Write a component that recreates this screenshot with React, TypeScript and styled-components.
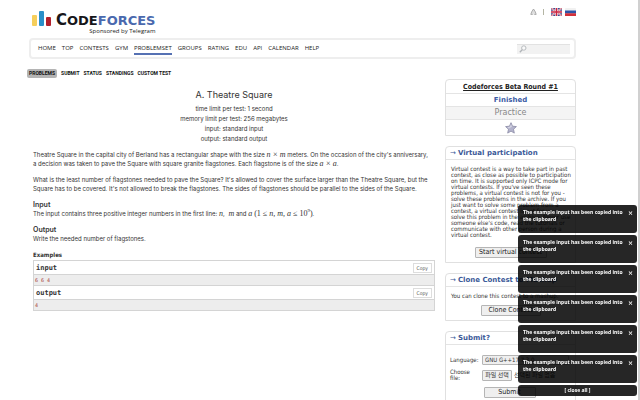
import React from 'react';
import styled, { createGlobalStyle } from 'styled-components';

const sans = '"Inter", "Liberation Sans", sans-serif';
const verdana = '"DejaVu Sans Condensed", "DejaVu Sans", sans-serif';
const verdanaWide = '"DejaVu Sans", sans-serif';
const menuFont = '"Open Sans", sans-serif';
const mono = '"DejaVu Sans Mono", monospace';

const Global = createGlobalStyle`
  * { box-sizing: border-box; }
  html { scrollbar-width: none; }
  body { margin: 0; background: #fff; color: #333; font: 6px/9px ${sans}; }
  button, input, select { font: inherit; color: inherit; margin: 0; }
  a { color: inherit; text-decoration: none; }
`;

const Page = styled.div`
  min-height: 100vh;
  padding: 7px 62px 0 29px;
  border-right: 2px solid #d0d0d0;
`;

const Header = styled.header`
  display: flex;
  justify-content: space-between;
  align-items: flex-start;
  height: 31px;
`;

const Brand = styled.a`
  display: flex;
  gap: 5px;
  padding: 4px 0 0 3px;
`;

const Wordmark = styled.div`
  display: flex;
  flex-direction: column;
  align-items: flex-end;
  padding-top: 2px;
`;

const LogoText = styled.span`
  display: block;
  font: bold 13px/14px ${verdanaWide};
  color: #16161a;
`;

const Initial = styled.span`
  font-size: 15px;
`;

const LogoBlue = styled.span`
  color: #4a69ae;
`;

const Sponsor = styled.span`
  font: 6px/6px ${menuFont};
  color: #222;
`;

const HeaderTools = styled.div`
  display: flex;
  align-items: center;
  gap: 3px;
  height: 10px;
`;

const Divider = styled.span`
  width: 1px;
  height: 6px;
  margin: 0 4px 0 3px;
  background: #b4b5a4;
`;

const NavBar = styled.nav`
  display: flex;
  align-items: center;
  justify-content: space-between;
  height: 21px;
  padding: 0 4px 0 7px;
  border: 2px solid #eeeeee;
  border-radius: 4px;
`;

const NavList = styled.div`
  display: flex;
  gap: 6px;
`;

const NavLink = styled.a<{ $active?: boolean }>`
  padding-top: 2px;
  font: 6px/9px ${menuFont};
  color: #222;
  border-bottom: 2px solid ${(p) => (p.$active ? '#5571b3' : 'transparent')};
`;

const SearchBox = styled.label`
  display: flex;
  align-items: center;
  width: 53px;
  height: 10px;
  padding-left: 2px;
  background: #f2f2f2;
  border-top: 1px solid #e2e2e2;
`;

const SearchInput = styled.input`
  flex: 1;
  min-width: 0;
  height: 8px;
  padding: 0 2px;
  border: 0;
  outline: 0;
  background: transparent;
`;

const SubNav = styled.nav`
  display: flex;
  gap: 4px;
  margin: 10px 0 0 -2px;
`;

const SubLink = styled.a<{ $active?: boolean }>`
  padding: 0 ${(p) => (p.$active ? 2 : 0)}px;
  font: bold 5px/9px Roboto, sans-serif;
  color: #111;
  border-radius: 2px;
  background: ${(p) => (p.$active ? '#b4b4b4' : 'transparent')};
`;

const Columns = styled.div`
  display: flex;
  align-items: flex-start;
  gap: 10px;
  margin-top: 1px;
`;

const Main = styled.main`
  flex: 1;
  min-width: 0;
  padding: 9px 0 0 4px;
`;

const ProblemHead = styled.div`
  text-align: center;
  line-height: 10px;
  margin-bottom: 6px;
`;

const Title = styled.h1`
  margin: 0 0 3px;
  font: 9px/13px ${sans};
`;

const Para = styled.p`
  margin: 0 0 7px;
  white-space: nowrap;
`;

const Heading = styled.h2`
  margin: 0;
  font: 600 7px/9px ${sans};
`;

const SmallHeading = styled.h2`
  margin: 0;
  font: bold 6px/10px ${verdana};
`;

const Math = styled.span`
  font: italic 8px/8px "Liberation Serif", serif;
`;

const Upright = styled.span`
  font-style: normal;
`;

const Sup = styled.sup`
  font-size: 5px;
  line-height: 0;
  font-style: normal;
`;

const Samples = styled.div`
  border: 1px solid #d4d4d4;
`;

const SampleHead = styled.div`
  display: flex;
  align-items: center;
  justify-content: space-between;
  height: 13px;
  padding: 0 2px;
  font: bold 7px/10px ${mono};
`;

const CopyButton = styled.button`
  height: 10px;
  padding: 0 3px;
  border: 1px solid #dddddd;
  background: #fff;
  font: 5px/8px ${verdana};
  color: #555;
`;

const SampleData = styled.pre<{ $last?: boolean }>`
  margin: 0;
  padding: 0 1px;
  height: ${(p) => (p.$last ? 11 : 12)}px;
  border: solid #d4d4d4;
  border-width: 1px 0 ${(p) => (p.$last ? 0 : 1)}px;
  background: #ededed;
  color: #a83a3a;
  font: 5px/10px ${mono};
`;

const Sidebar = styled.aside`
  width: 131px;
  display: flex;
  flex-direction: column;
  gap: 10px;
`;

const Box = styled.section`
  border: 1px solid #e0e0e0;
  border-radius: 4px 4px 0 0;
  font: 6px/6px ${verdana};
`;

const BoxTitle = styled.h3`
  display: flex;
  align-items: center;
  gap: 2px;
  height: 13px;
  margin: 0;
  padding-left: 4px;
  border-bottom: 1px solid #e4e4e4;
  font: bold 7px/12px ${verdanaWide};
  color: #3b5998;
  white-space: nowrap;
`;

const Arrow = styled.span`
  font-weight: normal;
`;

const BoxBody = styled.div`
  display: flex;
  flex-direction: column;
  align-items: center;
  padding: 6px 5px 4px;
`;

const BoxText = styled.p<{ $gap: number }>`
  align-self: stretch;
  margin: 0 0 ${(p) => p.$gap}px;
  white-space: nowrap;
`;

const ContestRow = styled.div<{ $tone?: 'name' | 'status' | 'phase' }>`
  display: flex;
  align-items: center;
  justify-content: center;
  height: ${(p) => (p.$tone ? 13 : 16)}px;
  border-top: ${(p) => (p.$tone === 'name' ? 0 : 1)}px solid #e4e4e4;
  background: ${(p) => (p.$tone === 'phase' ? '#f4f4f4' : 'transparent')};
  color: ${(p) => (p.$tone === 'status' ? '#3b5ba5' : p.$tone === 'phase' ? '#888' : '#222')};
  font: ${(p) => (p.$tone === 'phase' ? `8px/10px ${verdanaWide}` : p.$tone === 'status' ? `bold 7px/10px ${verdanaWide}` : `bold 7px/10px ${verdana}`)};
`;

const ContestLink = styled.a`
  text-decoration: underline;
`;

const Button = styled.button<{ $width: number }>`
  min-width: ${(p) => p.$width}px;
  height: 11px;
  padding: 0 3px;
  border: 1px solid #b5b5b5;
  border-radius: 1px;
  background: #efefef;
  font: 7px/9px ${verdana};
  color: #222;
  white-space: nowrap;
`;

const SubmitForm = styled.form`
  display: grid;
  grid-template-columns: 28px 1fr;
  row-gap: 4px;
  column-gap: 4px;
  align-items: center;
  padding: 10px 6px 6px 4px;
`;

const Select = styled.select`
  appearance: none;
  width: 100%;
  height: 10px;
  padding: 0 2px;
  border: 1px solid #b5b5b5;
  border-radius: 1px;
  background: #efefef;
  font: 6px/8px ${verdana};
`;

const FilePicker = styled.div`
  display: flex;
  align-items: center;
  gap: 2px;
  font: 6px/8px "Noto Sans CJK KR", sans-serif;
  white-space: nowrap;
`;

const FileButton = styled.button`
  width: 30px;
  height: 11px;
  padding: 0;
  border: 1px solid #b5b5b5;
  border-radius: 1px;
  background: #efefef;
`;

const SubmitRow = styled.div`
  grid-column: 1 / -1;
  display: flex;
  justify-content: center;
  padding-top: 2px;
`;

const Toasts = styled.div`
  position: fixed;
  right: 3px;
  bottom: 4px;
  width: 119px;
  display: flex;
  flex-direction: column;
  gap: 2px;
  color: #fff;
`;

const Toast = styled.div`
  display: flex;
  justify-content: space-between;
  height: 28px;
  padding: 4px 4px 0 5px;
  border-radius: 3px;
  background: rgba(0, 0, 0, 0.85);
  font: bold 5px/7px ${menuFont};
  white-space: nowrap;
`;

const ToastClose = styled.button`
  align-self: flex-start;
  padding: 0;
  border: 0;
  background: none;
  font: bold 6px/7px ${verdanaWide};
`;

const CloseAll = styled.button`
  height: 11px;
  padding: 0;
  border: 0;
  border-radius: 3px;
  background: rgba(0, 0, 0, 0.85);
  font: bold 5px/9px ${menuFont};
`;

const LogoBars = () => (
  <svg width="19" height="16" viewBox="0 0 19 16" aria-hidden="true">
    <rect x="0" y="4" width="5" height="11" rx="1" fill="#f6cf5c" />
    <rect x="7" y="0" width="5" height="15" rx="1" fill="#2a8fc9" />
    <rect x="14" y="6" width="5" height="9" rx="1" fill="#b3202c" />
  </svg>
);

const Bell = () => (
  <svg width="7" height="8" viewBox="0 0 7 8" aria-hidden="true">
    <path d="M3.500 1L1.700 3.800L.8 6.400h5.400L5.300 3.800Z" fill="#ddd" stroke="#a4a4a4" strokeWidth=".9" strokeLinejoin="round" />
    <path d="M2.700 5.500h1.600v1.500H2.700z" fill="#eee" />
  </svg>
);

const FlagUK = () => (
  <svg width="11" height="8" viewBox="0 0 11 8" role="img" aria-label="In English">
    <rect width="11" height="8" rx="1" fill="#3d4a8f" />
    <path d="M0 0l11 8M11 0L0 8" stroke="#f1e6ea" strokeWidth="1.8" />
    <path d="M0 0l11 8M11 0L0 8" stroke="#c8344c" strokeWidth=".7" />
    <path d="M5.500 0v8M0 4h11" stroke="#f6eef0" strokeWidth="2.600" />
    <path d="M5.500 0v8M0 4h11" stroke="#cc2440" strokeWidth="1.400" />
  </svg>
);

const FlagRU = () => (
  <svg width="11" height="8" viewBox="0 0 11 8" role="img" aria-label="In Russian">
    <rect width="11" height="8" rx="1" fill="#f1f1f1" />
    <rect y="2.500" width="11" height="3" fill="#2b55a8" />
    <rect y="5.300" width="11" height="2.700" fill="#d2303a" />
  </svg>
);

const Magnifier = () => (
  <svg width="8" height="8" viewBox="0 0 8 8" aria-hidden="true">
    <circle cx="4.800" cy="3" r="2.200" fill="#fafafa" stroke="#b0b4b8" strokeWidth=".9" />
    <path d="M3.200 4.700L.8 7.200" stroke="#b0b4b8" strokeWidth="1.300" />
  </svg>
);

const Star = () => (
  <svg width="12" height="12" viewBox="0 0 12 12" role="img" aria-label="Add to favourites">
    <path d="M6 .7l1.500 3.500 3.900.4-2.900 2.600.8 3.900L6 9.100l-3.300 2 .8-3.900L.6 4.600l3.900-.4Z" fill="#b3b3cc" stroke="#9292ac" strokeWidth=".9" strokeLinejoin="round" />
    <path d="M6 2.200l1 2.600-3.200 1.600L2.400 5.200l2.500-.4Z" fill="#d4d4e4" />
  </svg>
);

const menu = ['HOME', 'TOP', 'CONTESTS', 'GYM', 'PROBLEMSET', 'GROUPS', 'RATING', 'EDU', 'API', 'CALENDAR', 'HELP'];
const subMenu = ['PROBLEMS', 'SUBMIT', 'STATUS', 'STANDINGS', 'CUSTOM TEST'];
const toasts = [1, 2, 3, 4, 5, 6];
const virtualLines = [
  'Virtual contest is a way to take part in past',
  'contest, as close as possible to participation',
  'on time. It is supported only ICPC mode for',
  "virtual contests. If you've seen these",
  'problems, a virtual contest is not for you -',
  'solve these problems in the archive. If you',
  'just want to solve some problem from a',
  'contest, a virtual contest is not for you -',
  'solve this problem in the archive. Never use',
  "someone else's code, read the tutorials or",
  'communicate with other person during a',
  'virtual contest.',
];

export default function App() {
  return (
    <>
      <Global />
      <Page>
        <Header>
          <Brand href="#">
            <LogoBars />
            <Wordmark>
              <LogoText><Initial>C</Initial>ODE<LogoBlue>FORCES</LogoBlue></LogoText>
              <Sponsor>Sponsored by Telegram</Sponsor>
            </Wordmark>
          </Brand>
          <HeaderTools>
            <Bell />
            <Divider />
            <FlagUK />
            <FlagRU />
          </HeaderTools>
        </Header>
        <NavBar>
          <NavList>
            {menu.map((m) => <NavLink href="#" key={m} $active={m === 'PROBLEMSET'}>{m}</NavLink>)}
          </NavList>
          <SearchBox>
            <Magnifier />
            <SearchInput type="text" aria-label="Search" />
          </SearchBox>
        </NavBar>
        <SubNav>
          {subMenu.map((m) => <SubLink href="#" key={m} $active={m === 'PROBLEMS'}>{m}</SubLink>)}
        </SubNav>
        <Columns>
          <Main>
            <ProblemHead>
              <Title>A. Theatre Square</Title>
              <div>time limit per test: 1 second</div>
              <div>memory limit per test: 256 megabytes</div>
              <div>input: standard input</div>
              <div>output: standard output</div>
            </ProblemHead>
            <Para>
              Theatre Square in the capital city of Berland has a rectangular shape with the size <Math>n × m</Math> meters. On the occasion of the city's anniversary,<br />
              a decision was taken to pave the Square with square granite flagstones. Each flagstone is of the size <Math>a × a</Math>.
            </Para>
            <Para>
              What is the least number of flagstones needed to pave the Square? It's allowed to cover the surface larger than the Theatre Square, but the<br />
              Square has to be covered. It's not allowed to break the flagstones. The sides of flagstones should be parallel to the sides of the Square.
            </Para>
            <Heading>Input</Heading>
            <Para>
              The input contains three positive integer numbers in the first line: <Math>n</Math>, <Math>&nbsp;m</Math> and <Math>a <Upright>(1 ≤ </Upright>n, m, a <Upright>≤ 10</Upright><Sup>9</Sup><Upright>)</Upright></Math>.
            </Para>
            <Heading>Output</Heading>
            <Para>Write the needed number of flagstones.</Para>
            <SmallHeading>Examples</SmallHeading>
            <Samples>
              <SampleHead>input<CopyButton>Copy</CopyButton></SampleHead>
              <SampleData>6 6 4</SampleData>
              <SampleHead>output<CopyButton>Copy</CopyButton></SampleHead>
              <SampleData $last>4</SampleData>
            </Samples>
          </Main>
          <Sidebar>
            <Box>
              <ContestRow $tone="name"><ContestLink href="#">Codeforces Beta Round #1</ContestLink></ContestRow>
              <ContestRow $tone="status">Finished</ContestRow>
              <ContestRow $tone="phase">Practice</ContestRow>
              <ContestRow><Star /></ContestRow>
            </Box>
            <Box>
              <BoxTitle><Arrow>→</Arrow>Virtual participation</BoxTitle>
              <BoxBody>
                <BoxText $gap={9}>
                  {virtualLines.map((l) => <React.Fragment key={l}>{l}<br /></React.Fragment>)}
                </BoxText>
                <Button $width={72}>Start virtual contest</Button>
              </BoxBody>
            </Box>
            <Box>
              <BoxTitle><Arrow>→</Arrow>Clone Contest to Mashup</BoxTitle>
              <BoxBody>
                <BoxText $gap={6}>You can clone this contest to a mashup.</BoxText>
                <Button $width={60}>Clone Contest</Button>
              </BoxBody>
            </Box>
            <Box>
              <BoxTitle><Arrow>→</Arrow>Submit?</BoxTitle>
              <SubmitForm>
                <label htmlFor="lang">Language:</label>
                <Select id="lang"><option>GNU G++17 7.3.0</option></Select>
                <label htmlFor="file">Choose<br />file:</label>
                <FilePicker><FileButton id="file" type="button">파일 선택</FileButton>선택된 파일 없음</FilePicker>
                <SubmitRow><Button type="button" $width={52}>Submit</Button></SubmitRow>
              </SubmitForm>
            </Box>
          </Sidebar>
        </Columns>
      </Page>
      <Toasts>
        {toasts.map((t) => (
          <Toast key={t}>
            <span>The example input has been copied into<br />the clipboard</span>
            <ToastClose aria-label="Close">×</ToastClose>
          </Toast>
        ))}
        <CloseAll>[ close all ]</CloseAll>
      </Toasts>
    </>
  );
}
